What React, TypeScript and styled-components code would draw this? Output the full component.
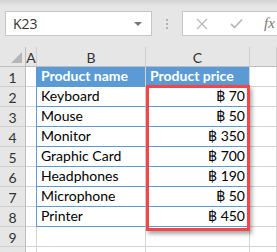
import React from 'react';
import styled, { createGlobalStyle } from 'styled-components';

const rows = [
  { name: 'Keyboard', price: 70 },
  { name: 'Mouse', price: 50 },
  { name: 'Monitor', price: 350 },
  { name: 'Graphic Card', price: 700 },
  { name: 'Headphones', price: 190 },
  { name: 'Microphone', price: 50 },
  { name: 'Printer', price: 450 },
];

const App: React.FC = () => {
  return (
    <Page>
      <GlobalStyle />
      <Toolbar>
        <NameBox>
          <span>K23</span>
          <Caret />
        </NameBox>
        <Dots>
          <i />
          <i />
          <i />
        </Dots>
        <FormulaBox>
          <svg width="12" height="12" viewBox="0 0 12 12">
            <path d="M1 1 L11 11 M11 1 L1 11" stroke="#b9b9b9" strokeWidth="1.3" fill="none" />
          </svg>
          <svg width="13" height="11" viewBox="0 0 13 11">
            <path d="M1 6 L4.5 9.5 L12 1.5" stroke="#b9b9b9" strokeWidth="1.8" fill="none" />
          </svg>
          <Fx>fx</Fx>
        </FormulaBox>
      </Toolbar>

      <Sheet>
        <Corner>
          <svg width="11" height="11" viewBox="0 0 11 11">
            <path d="M11 0 L11 11 L0 11 Z" fill="#b5b5b5" />
          </svg>
        </Corner>
        <ColHead>A</ColHead>
        <ColHead>B</ColHead>
        <ColHead>C</ColHead>
        <ColHead />

        <RowHead>1</RowHead>
        <Cell />
        <Cell $table $header $first>Product name</Cell>
        <Cell $table $header>Product price</Cell>
        <Cell />

        {rows.map((r, i) => (
          <React.Fragment key={r.name}>
            <RowHead>{i + 2}</RowHead>
            <Cell />
            <Cell $table $first>{r.name}</Cell>
            <Cell $table $right>฿ {r.price}</Cell>
            <Cell />
          </React.Fragment>
        ))}

        <RowHead>9</RowHead>
        <Cell />
        <Cell />
        <Cell />
        <Cell />

        {/* row 10 only peeks in at the bottom edge */}
        <RowHead />
        <Cell />
        <Cell />
        <Cell />
        <Cell />

        <Highlight />
      </Sheet>
    </Page>
  );
};

export default App;

const GlobalStyle = createGlobalStyle`
  html, body {
    margin: 0;
    padding: 0;
    background: #e6e6e6;
    overflow: hidden;
  }
`;

const Page = styled.div`
  width: 277px;
  height: 252px;
  overflow: hidden;
  background: #e6e6e6;
  font-family: Lato, "Liberation Sans", sans-serif;
`;

const Toolbar = styled.div`
  height: 47px;
  box-sizing: border-box;
  padding-top: 11px;
  display: flex;
  align-items: flex-start;
  background: linear-gradient(#d2d2d2 0px, #e6e6e6 6px);
`;

const NameBox = styled.div`
  margin-left: 5px;
  width: 147px;
  height: 25px;
  box-sizing: border-box;
  background: #fff;
  border: 1px solid #c6c6c6;
  display: flex;
  align-items: center;
  justify-content: space-between;
  padding: 0 9px 0 7px;
  font-family: "Open Sans", "Liberation Sans", sans-serif;
  font-size: 14px;
  color: #333;
`;

const Caret = styled.span`
  width: 0;
  height: 0;
  border-left: 4px solid transparent;
  border-right: 4px solid transparent;
  border-top: 4px solid #777;
`;

const Dots = styled.div`
  width: 30px;
  height: 25px;
  display: flex;
  flex-direction: column;
  align-items: center;
  justify-content: center;
  gap: 2px;
  i {
    width: 2px;
    height: 2px;
    background: #b0b0b0;
  }
`;

const FormulaBox = styled.div`
  flex: 1;
  height: 25px;
  box-sizing: border-box;
  background: #fff;
  border: 1px solid #c6c6c6;
  border-right: none;
  display: flex;
  align-items: center;
  padding-left: 13px;
  gap: 22px;
`;

const Fx = styled.span`
  font-family: "Liberation Serif", serif;
  font-style: italic;
  font-size: 15px;
  color: #777;
  margin-left: -1px;
`;

const Sheet = styled.div`
  position: relative;
  display: grid;
  grid-template-columns: 26px 11px 109px 104px 1fr;
  grid-template-rows: 20px repeat(10, 20px);
  background: #fff;
  font-size: 14px;
`;

const HeadBase = styled.div`
  box-sizing: border-box;
  background: #e6e6e6;
  color: #333;
  display: flex;
  align-items: center;
  justify-content: center;
  border-right: 1px solid #bdbdbd;
  border-bottom: 1px solid #bdbdbd;
  font-size: 14px;
  line-height: 1;
`;

const Corner = styled(HeadBase)`
  align-items: flex-end;
  justify-content: flex-end;
  padding: 0 3px 3px 0;
`;

const ColHead = styled(HeadBase)`
  border-right: 1px solid #cfcfcf;
  padding-top: 2px;
`;

const RowHead = styled(HeadBase)`
  border-bottom: 1px solid #cfcfcf;
  padding-top: 2px;
`;

const Cell = styled.div<{ $table?: boolean; $header?: boolean; $first?: boolean; $right?: boolean }>`
  box-sizing: border-box;
  border-right: 1px solid #d4d4d4;
  border-bottom: 1px solid ${({ $table }) => ($table ? '#5b9bd5' : '#d4d4d4')};
  ${({ $first }) => ($first ? 'border-left: 1px solid #5b9bd5; margin-left: -1px;' : '')}
  background: ${({ $header }) => ($header ? '#5b9bd5' : '#fff')};
  color: ${({ $header }) => ($header ? '#fff' : '#000')};
  font-weight: ${({ $header }) => ($header ? 700 : 400)};
  display: flex;
  align-items: flex-end;
  justify-content: ${({ $right }) => ($right ? 'flex-end' : 'flex-start')};
  padding: 0 4px 1px 4px;
  white-space: nowrap;
  overflow: hidden;
  line-height: 18px;
`;

const Highlight = styled.div`
  position: absolute;
  left: 146px;
  top: 38px;
  width: 104px;
  height: 146px;
  box-sizing: border-box;
  border: 3.5px solid #f44646;
  box-shadow: 2px 3px 4px rgba(0, 0, 0, 0.35);
  pointer-events: none;
`;
